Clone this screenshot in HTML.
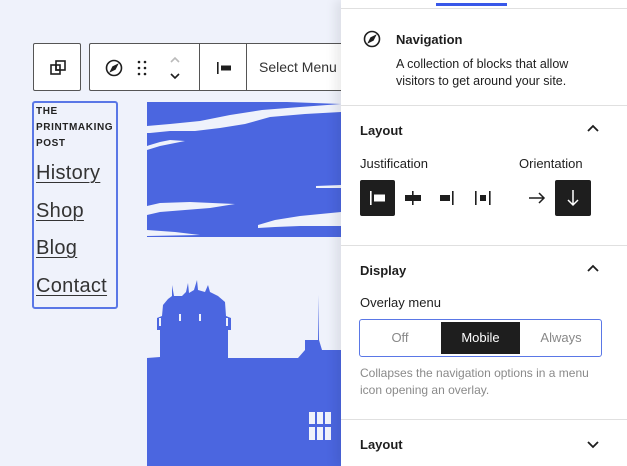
<!DOCTYPE html>
<html><head><meta charset="utf-8">
<style>
*{box-sizing:border-box;margin:0;padding:0}
body{width:627px;height:466px;overflow:hidden;background:#eff2fb;font-family:"Liberation Sans",sans-serif;position:relative;color:#1e1e1e}
.abs{position:absolute}
.tb{position:absolute;top:43px;height:48px;border:1px solid #555;border-radius:2px;background:#fff}
.panel{position:absolute;left:341px;top:0;width:286px;height:466px;background:#fff;box-shadow:-6px 0 10px rgba(0,0,0,0.08)}
.hr{position:absolute;left:0;right:0;height:1px;background:#e0e0e0}
.h{position:absolute;left:19px;font-size:13px;font-weight:bold}
.lbl{position:absolute;font-size:13px;color:#1e1e1e}
.nav a{display:block;color:#333;text-decoration:underline;font-size:20px;letter-spacing:0.3px;text-decoration-thickness:1px;text-underline-offset:3px}
</style></head><body>
<div class="tb" style="left:33px;width:48px">
<svg class="abs" style="left:14px;top:14px" width="20" height="20" viewBox="0 0 20 20" fill="none" stroke="#1e1e1e" stroke-width="1.6"><rect x="3" y="7" width="9" height="9"/><rect x="8" y="3" width="9" height="9" fill="#fff"/><rect x="8" y="7" width="4" height="5"/></svg>
</div>
<div class="tb" style="left:89px;width:260px;border-right:none">
<svg class="abs" style="left:14px;top:14px" width="20" height="20" viewBox="0 0 20 20" fill="none" stroke="#1e1e1e" stroke-width="1.6"><circle cx="10" cy="10" r="7.5"/><path d="M7 13 L9 9 L13 7 L11 11Z" fill="#1e1e1e"/></svg>
<svg class="abs" style="left:47px;top:15px" width="10" height="18" viewBox="0 0 10 18" fill="#1e1e1e"><circle cx="2" cy="3" r="1.3"/><circle cx="8" cy="3" r="1.3"/><circle cx="2" cy="9" r="1.3"/><circle cx="8" cy="9" r="1.3"/><circle cx="2" cy="15" r="1.3"/><circle cx="8" cy="15" r="1.3"/></svg>
<svg class="abs" style="left:78px;top:10px" width="14" height="28" viewBox="0 0 14 28" fill="none" stroke-width="1.6"><path d="M3 8 L7 4 L11 8" stroke="#bbb"/><path d="M3 20 L7 24 L11 20" stroke="#1e1e1e"/></svg>
<div class="abs" style="left:109px;top:0;width:1px;height:46px;background:#555"></div>
<svg class="abs" style="left:124px;top:14px" width="20" height="20" viewBox="0 0 20 20"><rect x="3" y="4" width="1.6" height="12" fill="#1e1e1e"/><rect x="7" y="7.5" width="10" height="5" fill="#1e1e1e"/></svg>
<div class="abs" style="left:156px;top:0;width:1px;height:46px;background:#555"></div>
<div class="abs" style="left:169px;top:15px;font-size:14px;color:#333">Select Menu</div>
</div>
<div class="abs" style="left:32px;top:101px;width:86px;height:208px;border:2px solid #5a77e6;border-radius:3px"></div>
<div class="abs" style="left:36px;top:104px;font-size:10px;font-weight:bold;letter-spacing:0.6px;line-height:16px;color:#222">THE<br>PRINTMAKING<br>POST</div>
<div class="abs nav" style="left:36px;top:155px;line-height:37.5px"><a>History</a><a>Shop</a><a>Blog</a><a>Contact</a></div>
<svg class="abs" style="left:147px;top:102px" width="194" height="364" viewBox="147 102 194 364">
<rect x="147" y="102" width="194" height="364" fill="#eff2fb"/>
<rect x="147" y="102" width="194" height="135" fill="#4b66e0"/>
<g fill="#eff2fb">
<path d="M287 102 L341 102 L341 104 Z"/>
<path d="M147 126 L170 124 L200 121 L230 115 L262 110 L300 107 L341 104 L341 112 L305 114 L270 117 L245 124 L220 128 L195 131 L170 131 L150 133 L147 133Z"/>
<path d="M147 150 L160 146 L175 143 L185 141 L170 140 L160 142 L150 145 L147 146Z"/>
<path d="M147 206 L160 203 L190 202 L235 204 L210 208 L185 210 L160 212 L147 215Z"/>
<path d="M258 225 L275 220 L300 216 L341 212 L341 226 L300 226 L275 227 L258 228Z"/>
<path d="M147 230 L175 232 L200 235 L147 236Z"/>
<path d="M316 186 L341 185 L341 188 L316 188Z"/>
</g>
<path d="M147 358 L160 357 L160 330 L157 330 L157 318 L162 316 L163 305 L168 299 L172 296 L172 285 L174 296 L182 296 L186 292 L188 283 L189 293 L194 290 L197 280 L198 290 L205 292 L208 285 L210 292 L218 296 L225 302 L226 316 L231 318 L231 330 L228 330 L228 358 L298 358 L305 350 L305 340 L318 340 L318 295 L319 340 L322 350 L341 350 L341 466 L147 466Z" fill="#4b66e0"/>
<g fill="#eff2fb"><rect x="159" y="318" width="2" height="8"/><rect x="179" y="314" width="2" height="7"/><rect x="199" y="314" width="2" height="7"/><rect x="226" y="318" width="2" height="8"/>
<rect x="309" y="412" width="6" height="12"/><rect x="317" y="412" width="6" height="12"/><rect x="325" y="412" width="6" height="12"/><rect x="309" y="427" width="6" height="13"/><rect x="317" y="427" width="6" height="13"/><rect x="325" y="427" width="6" height="13"/></g>
</svg>
<div class="panel">
<div class="abs" style="left:95px;top:3px;width:71px;height:3px;background:#3858e9"></div>
<div class="hr" style="top:8px"></div>
<svg class="abs" style="left:21px;top:29px" width="20" height="20" viewBox="0 0 20 20" fill="none" stroke="#1e1e1e" stroke-width="1.6"><circle cx="10" cy="10" r="7.5"/><path d="M7 13 L9 9 L13 7 L11 11Z" fill="#1e1e1e"/></svg>
<div class="abs" style="left:55px;top:32px;font-size:13px;font-weight:bold">Navigation</div>
<div class="abs" style="left:55px;top:56px;font-size:12.5px;line-height:17px;color:#1e1e1e">A collection of blocks that allow<br>visitors to get around your site.</div>
<div class="hr" style="top:105px"></div>
<div class="h" style="top:123px">Layout</div>
<svg class="abs" style="left:245px;top:122px" width="14" height="14" viewBox="0 0 14 14" fill="none" stroke="#1e1e1e" stroke-width="1.8"><path d="M2 9 L7 4 L12 9"/></svg>
<div class="lbl" style="left:19px;top:156px">Justification</div>
<div class="lbl" style="left:178px;top:156px">Orientation</div>
<div class="abs" style="left:19px;top:180px;width:35px;height:36px;background:#1e1e1e;border-radius:2px"></div>
<svg class="abs" style="left:19px;top:180px" width="35" height="36" viewBox="0 0 35 36"><rect x="10" y="11" width="1.6" height="14" fill="#fff"/><rect x="14" y="14.5" width="11" height="7" fill="#fff"/></svg>
<svg class="abs" style="left:60px;top:188px" width="24" height="20" viewBox="0 0 24 20"><rect x="11" y="3" width="1.6" height="14" fill="#1e1e1e"/><rect x="4" y="7" width="16" height="6" fill="#1e1e1e"/></svg>
<svg class="abs" style="left:95px;top:188px" width="24" height="20" viewBox="0 0 24 20"><rect x="16" y="3" width="1.6" height="14" fill="#1e1e1e"/><rect x="4" y="7" width="10" height="6" fill="#1e1e1e"/></svg>
<svg class="abs" style="left:131px;top:188px" width="24" height="20" viewBox="0 0 24 20"><rect x="3" y="3" width="1.6" height="14" fill="#1e1e1e"/><rect x="17" y="3" width="1.6" height="14" fill="#1e1e1e"/><rect x="8" y="7" width="6" height="6" fill="#1e1e1e"/></svg>
<svg class="abs" style="left:186px;top:188px" width="20" height="20" viewBox="0 0 20 20" fill="none" stroke="#1e1e1e" stroke-width="1.5"><path d="M2 10 H17 M12 5 L17 10 L12 15"/></svg>
<div class="abs" style="left:214px;top:180px;width:36px;height:36px;background:#1e1e1e;border-radius:2px"></div>
<svg class="abs" style="left:214px;top:180px" width="36" height="36" viewBox="0 0 36 36" fill="none" stroke="#fff" stroke-width="1.5"><path d="M18 10 V25 M13 20 L18 25 L23 20"/></svg>
<div class="hr" style="top:245px"></div>
<div class="h" style="top:263px">Display</div>
<svg class="abs" style="left:245px;top:262px" width="14" height="14" viewBox="0 0 14 14" fill="none" stroke="#1e1e1e" stroke-width="1.8"><path d="M2 9 L7 4 L12 9"/></svg>
<div class="lbl" style="left:19px;top:295px">Overlay menu</div>
<div class="abs" style="left:18px;top:319px;width:243px;height:38px;border:1.5px solid #5a77e6;border-radius:3px"></div>
<div class="abs" style="left:100px;top:322px;width:79px;height:32px;background:#1e1e1e"></div>
<div class="abs" style="left:18px;top:330px;width:82px;text-align:center;font-size:13px;color:#888">Off</div>
<div class="abs" style="left:100px;top:330px;width:79px;text-align:center;font-size:13px;color:#fff">Mobile</div>
<div class="abs" style="left:179px;top:330px;width:82px;text-align:center;font-size:13px;color:#888">Always</div>
<div class="abs" style="left:19px;top:365px;font-size:12px;line-height:16.5px;color:#8a8a8a">Collapses the navigation options in a menu<br>icon opening an overlay.</div>
<div class="hr" style="top:419px"></div>
<div class="h" style="top:437px">Layout</div>
<svg class="abs" style="left:245px;top:437px" width="14" height="14" viewBox="0 0 14 14" fill="none" stroke="#1e1e1e" stroke-width="1.8"><path d="M2 5 L7 10 L12 5"/></svg>
</div>
</body></html>
